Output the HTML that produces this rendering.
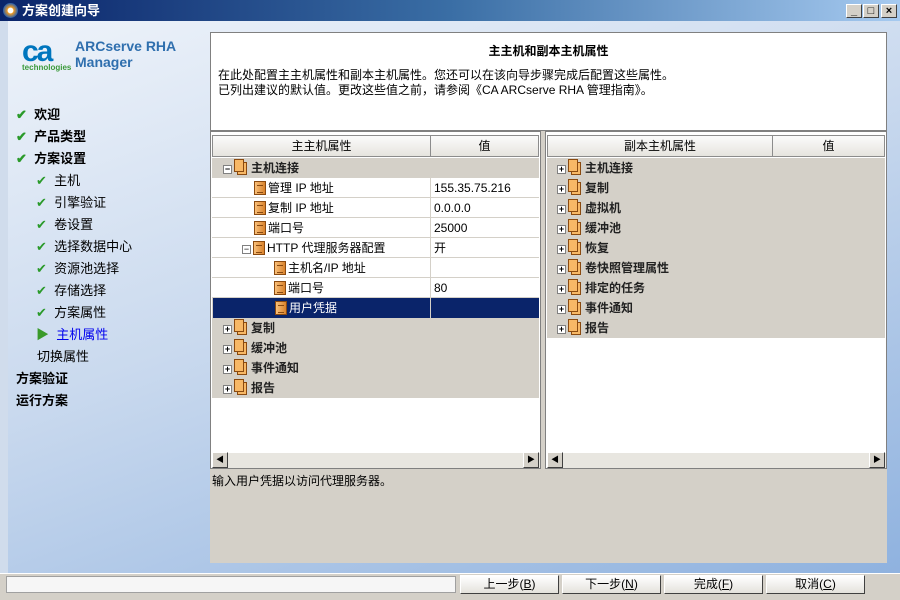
<!DOCTYPE html><html><head><meta charset="utf-8"><style>
*{margin:0;padding:0;box-sizing:border-box}
body{width:900px;height:600px;overflow:hidden;position:relative;font-family:"Liberation Sans","Noto Sans CJK SC",sans-serif;font-size:12px;color:#000;background:#d4d0c8}
.a{position:absolute}
.title{left:0;top:0;width:900px;height:21px;background:linear-gradient(90deg,#0a246a,#3a6ea5 50%,#a6caf0);color:#fff;font-weight:bold;font-size:13px;line-height:21px;padding-left:22px}
.body{left:0;top:21px;width:900px;height:552px;background:linear-gradient(160deg,#eef3fa 0%,#c9d9ee 45%,#8fb2df 100%);border-left:8px solid #d0dcec}
.wb{width:16px;height:14px;background:#d4d0c8;border:1px solid;border-color:#fff #404040 #404040 #fff;top:4px;font-size:11px;line-height:12px;text-align:center;font-weight:bold;color:#000}
.nav{font-size:13px;line-height:22px;height:22px}
.b{font-weight:bold}
.chk{width:12px;height:10px}
.panel{background:#d4d0c8;border:1px solid #808080}
.hd{height:22px;top:3px;background:linear-gradient(#fbfbfb,#e6e4de);border:1px solid #8c8c8c;text-align:center;line-height:20px;font-size:12px}
.row{height:20px;line-height:20px;font-size:12px;white-space:nowrap}
.w{background:#fff;border-bottom:1px solid #d4d0c8}
.doc{display:inline-block;width:12px;height:14px;background:linear-gradient(90deg,#f9c07a,#d9822b);border:1px solid #8a4a10;vertical-align:-3px;margin-right:2px;position:relative}
.doc:after{content:"";position:absolute;left:2px;top:3px;width:6px;height:6px;border-top:1px solid #8a4a10;border-bottom:1px solid #8a4a10}
.bk{display:inline-block;width:14px;height:16px;position:relative;vertical-align:-3px;margin-right:3px}
.bk i{position:absolute;width:10px;height:13px;background:#f7b866;border:1px solid #8a4a10}
.pm{display:inline-block;width:9px;height:9px;border:1px solid #808080;background:#fff;font-size:9px;line-height:7px;text-align:center;margin-right:2px;vertical-align:0px;color:#000}
.sb{height:16px;background:#e8e6e0;border-top:1px solid #fff}
.arr{width:16px;height:16px;background:#d4d0c8;border:1px solid;border-color:#fff #404040 #404040 #fff;font-size:8px;line-height:14px;text-align:center}
.btn{top:575px;width:99px;height:19px;background:linear-gradient(#fff,#e4e2dc);border:1px solid;border-color:#fff #404040 #404040 #fff;text-align:center;line-height:17px;font-size:12px}
</style></head><body>
<div class="a title">方案创建向导</div>
<div class="a" style="left:3px;top:3px;width:15px;height:15px;border-radius:50%;background:radial-gradient(#fff 25%,#f29a1e 30%,#2860b0 70%)"></div>
<div class="a wb" style="left:846px">_</div><div class="a wb" style="left:863px">□</div><div class="a wb" style="left:881px">×</div>
<div class="a body"></div>
<div class="a" style="left:22px;top:35px;font:bold 30px 'Liberation Sans',sans-serif;color:#0076be;letter-spacing:-2px">ca</div>
<div class="a" style="left:22px;top:63px;font-size:8px;color:#3a9a3a;font-weight:bold">technologies</div>
<div class="a" style="left:75px;top:38px;font-size:14px;font-weight:bold;color:#2f6fae;line-height:16px">ARCserve RHA<br>Manager</div>
<div class="a" style="left:16px;top:104px">
<div class="nav b"><span style="color:#2a9a2a">✔</span>&nbsp; 欢迎</div>
<div class="nav b"><span style="color:#2a9a2a">✔</span>&nbsp; 产品类型</div>
<div class="nav b"><span style="color:#2a9a2a">✔</span>&nbsp; 方案设置</div>
<div class="nav" style="padding-left:20px"><span style="color:#2a9a2a">✔</span>&nbsp; 主机</div>
<div class="nav" style="padding-left:20px"><span style="color:#2a9a2a">✔</span>&nbsp; 引擎验证</div>
<div class="nav" style="padding-left:20px"><span style="color:#2a9a2a">✔</span>&nbsp; 卷设置</div>
<div class="nav" style="padding-left:20px"><span style="color:#2a9a2a">✔</span>&nbsp; 选择数据中心</div>
<div class="nav" style="padding-left:20px"><span style="color:#2a9a2a">✔</span>&nbsp; 资源池选择</div>
<div class="nav" style="padding-left:20px"><span style="color:#2a9a2a">✔</span>&nbsp; 存储选择</div>
<div class="nav" style="padding-left:20px"><span style="color:#2a9a2a">✔</span>&nbsp; 方案属性</div>
<div class="nav" style="padding-left:20px;color:#0000ee"><span style="color:#3a9a2a">▶</span>&nbsp; 主机属性</div>
<div class="nav" style="padding-left:21px">切换属性</div>
<div class="nav b">方案验证</div>
<div class="nav b">运行方案</div>
</div>
<div class="a" style="left:210px;top:32px;width:677px;height:99px;background:#fff;border:1px solid #808080">
<div style="text-align:center;font-weight:bold;font-size:12px;margin-top:9px">主主机和副本主机属性</div>
<div style="padding-left:7px;margin-top:9px;line-height:15px;font-size:12px">在此处配置主主机属性和副本主机属性。您还可以在该向导步骤完成后配置这些属性。<br>已列出建议的默认值。更改这些值之前，请参阅《CA ARCserve RHA 管理指南》。</div>
</div>
<div class="a" style="left:210px;top:131px;width:677px;height:432px;background:#d4d0c8"></div>
<div class="a panel" style="left:210px;top:131px;width:331px;height:338px;background:#fff">
<div class="a hd" style="left:1px;width:219px">主主机属性</div><div class="a hd" style="left:219px;width:109px">值</div>
<div class="a" style="left:1px;top:26px;width:327px;height:240px;background:#d4d0c8"></div>
<div class="a" style="left:1px;top:26px;width:327px">
<div class="row" style="padding-left:11px;font-weight:bold;color:#222"><span class="pm">−</span><span class="bk"><i style="left:3px;top:3px"></i><i style="left:0;top:0"></i></span>主机连接</div>
<div class="row w" style="padding-left:42px;position:relative"><span class="doc"></span>管理 IP 地址<span class="a" style="left:218px;top:0;border-left:1px solid #d4d0c8;padding-left:3px">155.35.75.216</span></div>
<div class="row w" style="padding-left:42px;position:relative"><span class="doc"></span>复制 IP 地址<span class="a" style="left:218px;top:0;border-left:1px solid #d4d0c8;padding-left:3px">0.0.0.0</span></div>
<div class="row w" style="padding-left:42px;position:relative"><span class="doc"></span>端口号<span class="a" style="left:218px;top:0;border-left:1px solid #d4d0c8;padding-left:3px">25000</span></div>
<div class="row w" style="padding-left:30px;position:relative"><span class="pm">−</span><span class="doc"></span>HTTP 代理服务器配置<span class="a" style="left:218px;top:0;border-left:1px solid #d4d0c8;padding-left:3px">开</span></div>
<div class="row w" style="padding-left:62px;position:relative"><span class="doc"></span>主机名/IP 地址<span class="a" style="left:218px;top:0;height:20px;border-left:1px solid #d4d0c8"></span></div>
<div class="row w" style="padding-left:62px;position:relative"><span class="doc"></span>端口号<span class="a" style="left:218px;top:0;border-left:1px solid #d4d0c8;padding-left:3px">80</span></div>
<div class="row" style="padding-left:62px;position:relative;background:#0a246a;color:#fff;margin-left:1px"><span class="doc"></span>用户凭据<span class="a" style="left:217px;top:0;height:20px;border-left:1px solid #d4d0c8"></span></div>
<div class="row" style="padding-left:11px;font-weight:bold;color:#222"><span class="pm">+</span><span class="bk"><i style="left:3px;top:3px"></i><i style="left:0;top:0"></i></span>复制</div>
<div class="row" style="padding-left:11px;font-weight:bold;color:#222"><span class="pm">+</span><span class="bk"><i style="left:3px;top:3px"></i><i style="left:0;top:0"></i></span>缓冲池</div>
<div class="row" style="padding-left:11px;font-weight:bold;color:#222"><span class="pm">+</span><span class="bk"><i style="left:3px;top:3px"></i><i style="left:0;top:0"></i></span>事件通知</div>
<div class="row" style="padding-left:11px;font-weight:bold;color:#222"><span class="pm">+</span><span class="bk"><i style="left:3px;top:3px"></i><i style="left:0;top:0"></i></span>报告</div>
</div>
<div class="a sb" style="left:1px;top:320px;width:328px"></div>
<div class="a arr" style="left:1px;top:320px">◀</div><div class="a arr" style="left:312px;top:320px">▶</div>
</div>
<div class="a panel" style="left:545px;top:131px;width:342px;height:338px;background:#fff">
<div class="a hd" style="left:1px;width:226px">副本主机属性</div><div class="a hd" style="left:226px;width:113px">值</div>
<div class="a" style="left:1px;top:26px;width:338px;height:180px;background:#d4d0c8"></div>
<div class="a" style="left:1px;top:26px;width:338px;font-weight:bold;color:#222">
<div class="row" style="padding-left:10px"><span class="pm">+</span><span class="bk"><i style="left:3px;top:3px"></i><i style="left:0;top:0"></i></span>主机连接</div>
<div class="row" style="padding-left:10px"><span class="pm">+</span><span class="bk"><i style="left:3px;top:3px"></i><i style="left:0;top:0"></i></span>复制</div>
<div class="row" style="padding-left:10px"><span class="pm">+</span><span class="bk"><i style="left:3px;top:3px"></i><i style="left:0;top:0"></i></span>虚拟机</div>
<div class="row" style="padding-left:10px"><span class="pm">+</span><span class="bk"><i style="left:3px;top:3px"></i><i style="left:0;top:0"></i></span>缓冲池</div>
<div class="row" style="padding-left:10px"><span class="pm">+</span><span class="bk"><i style="left:3px;top:3px"></i><i style="left:0;top:0"></i></span>恢复</div>
<div class="row" style="padding-left:10px"><span class="pm">+</span><span class="bk"><i style="left:3px;top:3px"></i><i style="left:0;top:0"></i></span>卷快照管理属性</div>
<div class="row" style="padding-left:10px"><span class="pm">+</span><span class="bk"><i style="left:3px;top:3px"></i><i style="left:0;top:0"></i></span>排定的任务</div>
<div class="row" style="padding-left:10px"><span class="pm">+</span><span class="bk"><i style="left:3px;top:3px"></i><i style="left:0;top:0"></i></span>事件通知</div>
<div class="row" style="padding-left:10px"><span class="pm">+</span><span class="bk"><i style="left:3px;top:3px"></i><i style="left:0;top:0"></i></span>报告</div>
</div>
<div class="a sb" style="left:1px;top:320px;width:339px"></div>
<div class="a arr" style="left:1px;top:320px">◀</div><div class="a arr" style="left:323px;top:320px">▶</div>
</div>
<div class="a" style="left:212px;top:472px;font-size:12px">输入用户凭据以访问代理服务器。</div>
<div class="a" style="left:0;top:573px;width:900px;height:27px;background:#d4d0c8;border-top:1px solid #fff"></div>
<div class="a" style="left:6px;top:576px;width:450px;height:17px;background:#f6f6f6;border:1px solid #a0a0a0"></div>
<div class="a btn" style="left:460px">上一步(<u>B</u>)</div>
<div class="a btn" style="left:562px">下一步(<u>N</u>)</div>
<div class="a btn" style="left:664px">完成(<u>F</u>)</div>
<div class="a btn" style="left:766px">取消(<u>C</u>)</div>
</body></html>
